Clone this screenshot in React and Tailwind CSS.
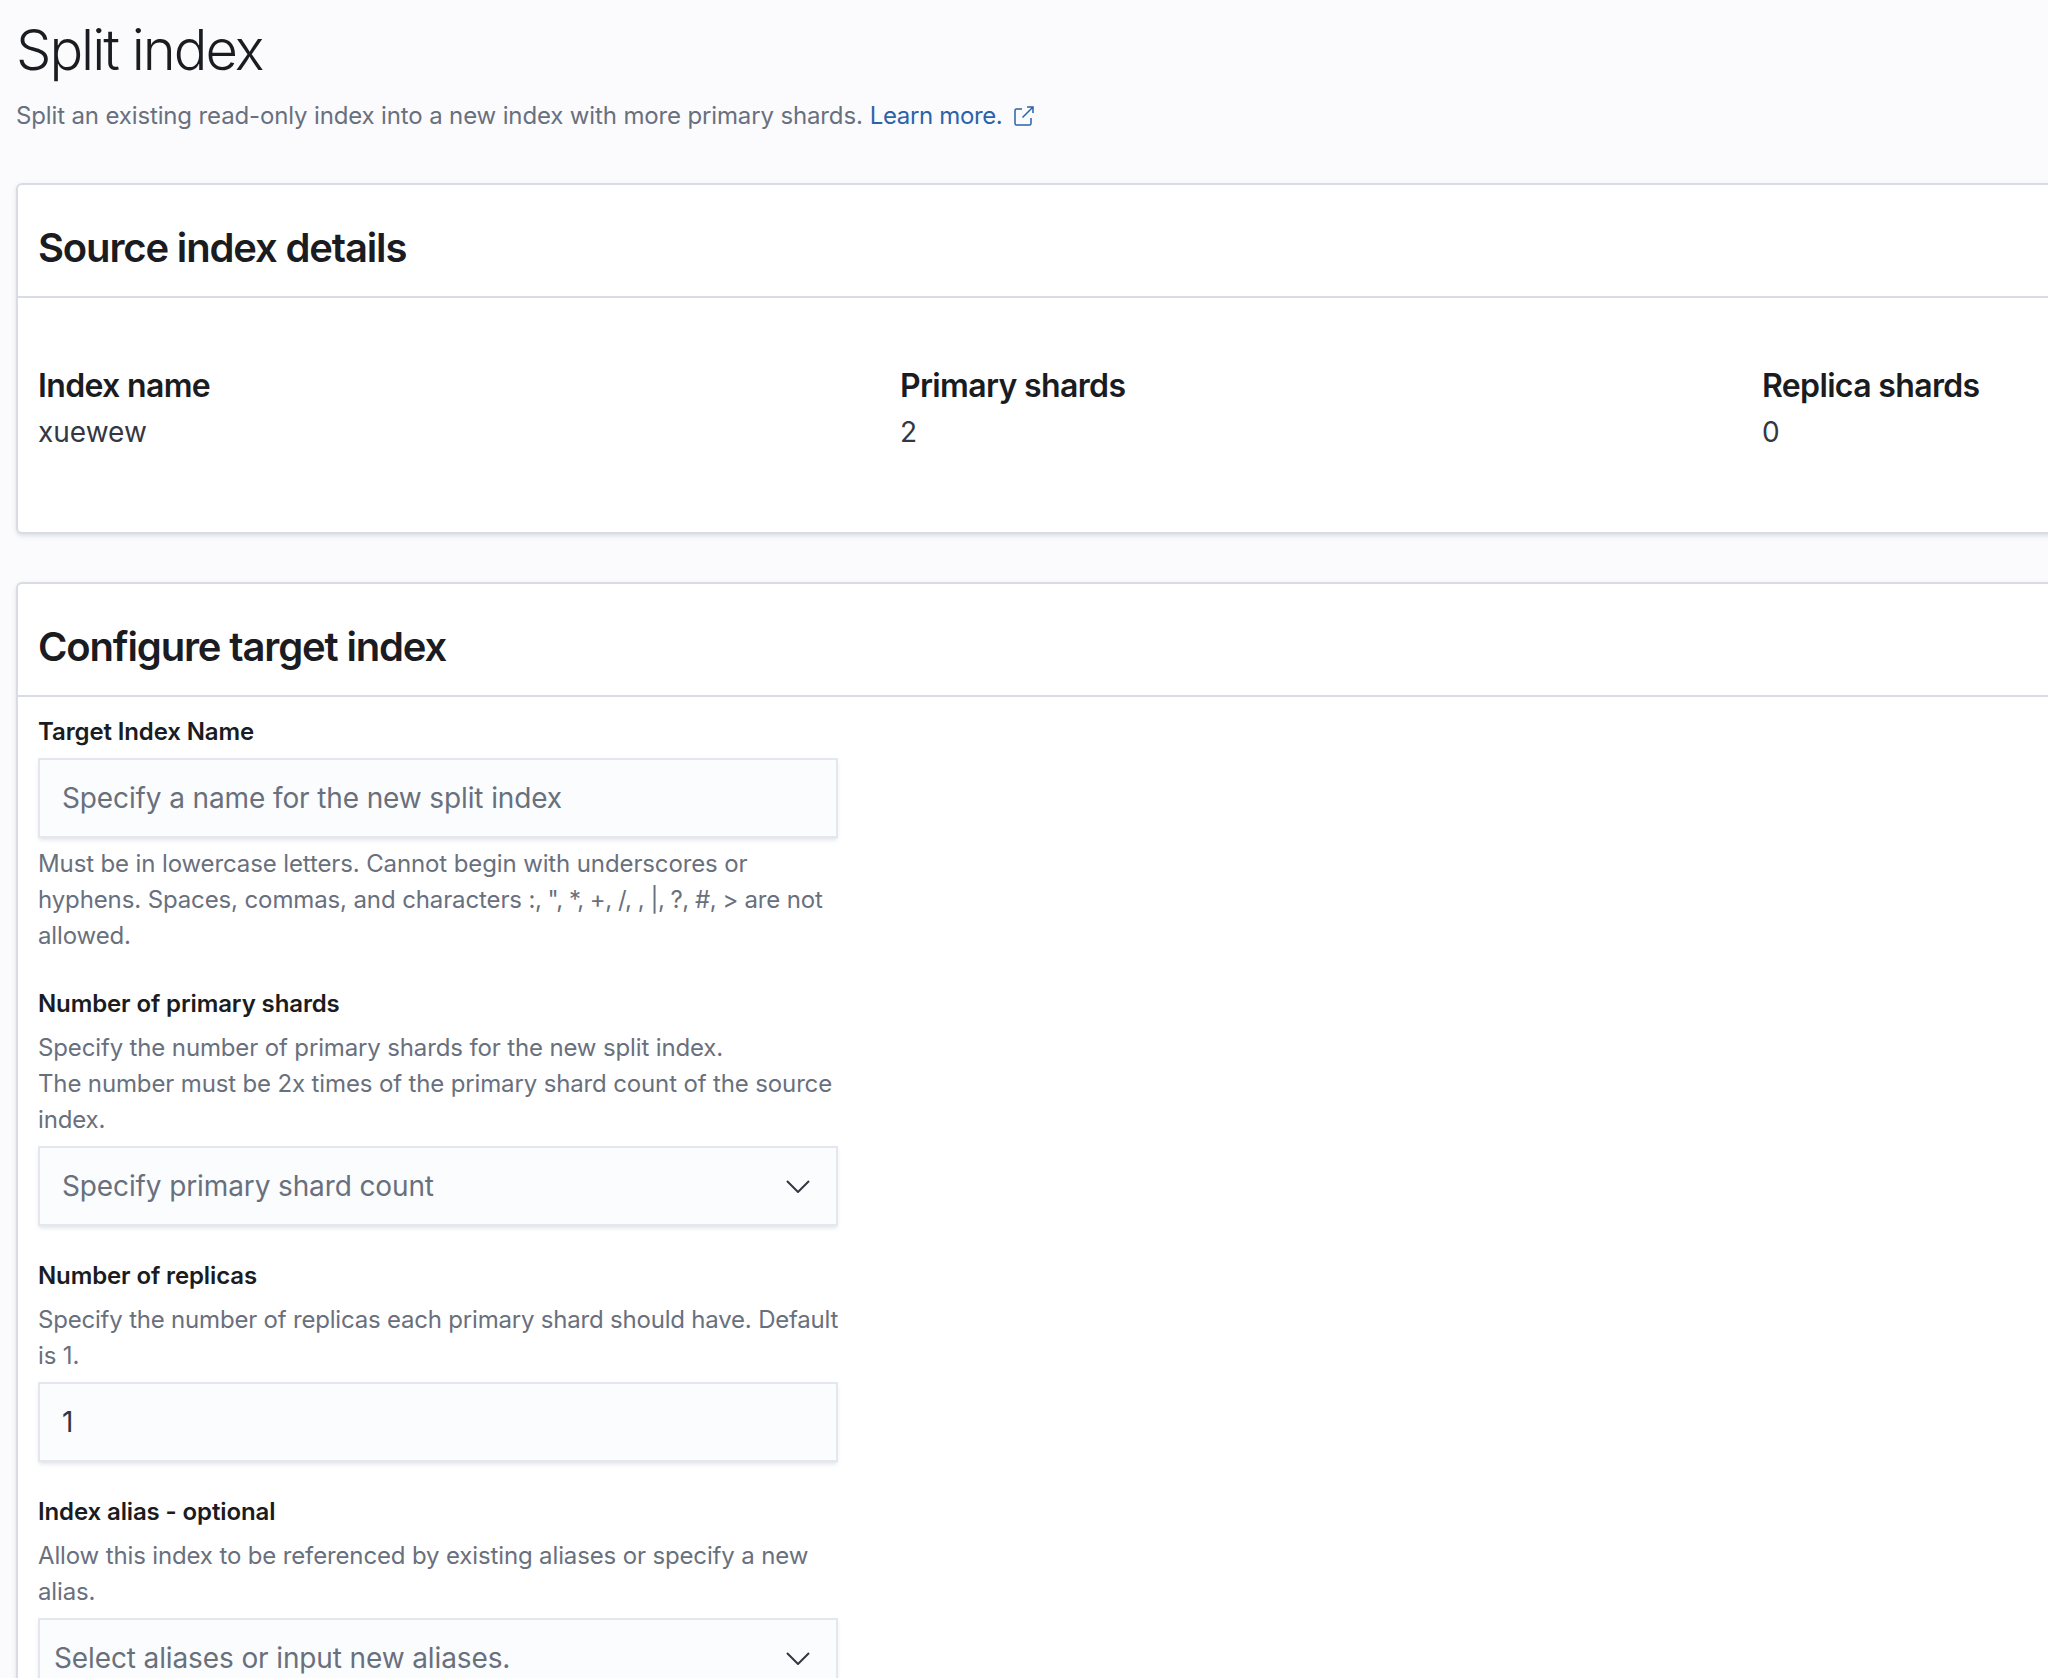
import { useState } from "react";

const font = { fontFamily: "Inter, 'Noto Sans', sans-serif" };

function Chevron() {
  return (
    <svg width="24" height="13" viewBox="0 0 24 13" fill="none" className="shrink-0 text-[#343741]">
      <path d="M1 1 L12 12 L23 1" stroke="currentColor" strokeWidth="2" />
    </svg>
  );
}

function PopoutIcon() {
  return (
    <svg width="20" height="20" viewBox="0 0 20 20" fill="none" className="ml-[12px] inline-block shrink-0 text-[#2b63a8]">
      <path d="M8 3H2.5A1.5 1.5 0 0 0 1 4.500v13A1.5 1.500 0 0 0 2.500 19h13a1.500 1.500 0 0 0 1.500-1.500V12" stroke="currentColor" strokeWidth="1.5" />
      <path d="M8.500 11.500 19 1M13 1h6v6" stroke="currentColor" strokeWidth="1.5" />
    </svg>
  );
}

function Stat({ label, value }) {
  return (
    <div>
      <div className="text-[32px] leading-[44px] font-semibold tracking-[-0.65px] text-[#1a1c21]">{label}</div>
      <div className="mt-[2px] text-[28px] leading-[44px] text-[#343741]">{value}</div>
    </div>
  );
}

function Card({ title, children }) {
  return (
    <section className="w-[2700px] rounded-[6px] border-2 border-[#d9dce4] bg-white shadow-[0_2px_4px_rgba(152,162,179,0.3)]">
      <div className="flex h-[113px] items-center border-b-2 border-[#d9dce4] px-[20px] pt-[15px]">
        <h2 className="text-[40px] font-[560] tracking-[-1.15px] text-[#1a1c21]">{title}</h2>
      </div>
      {children}
    </section>
  );
}

function Field({ label, help, children, after }) {
  return (
    <div className="w-[800px]">
      <div className="text-[24px] leading-[36px] font-semibold tracking-[-0.12px] text-[#1a1c21]">{label}</div>
      {help ? (
        <p className="mt-[8px] mb-[8px] text-[24px] leading-[36px] tracking-[-0.14px] text-[#69707d]">{help}</p>
      ) : (
        <div className="h-[8px]" />
      )}
      {children}
      {after ? <div className="mt-[8px] text-[24px] leading-[36px] tracking-[-0.12px] text-[#69707d]">{after}</div> : null}
    </div>
  );
}

const boxClass =
  "flex h-[80px] w-[800px] items-center justify-between border-2 border-[#e4e7ee] bg-[#fbfcfe] text-[28px] tracking-[-0.12px] shadow-[0_3px_4px_-1px_rgba(152,162,179,0.3)] outline-none";

function SelectBox({ text, pad }) {
  return (
    <div className={`${boxClass} ${pad} pr-[26px] text-[#69707d]`}>
      <span>{text}</span>
      <Chevron />
    </div>
  );
}

export default function App() {
  const [name, setName] = useState("");
  const [replicas, setReplicas] = useState("1");

  return (
    <div style={font} className="h-[1678px] w-[2048px] overflow-hidden bg-[#fbfbfd] pl-[16px]">
      <h1 className="pt-[14px] text-[56px] leading-[72px] font-light tracking-[-2px] text-[#1a1c21]">Split index</h1>
      <p className="mt-[12px] flex items-center text-[24px] leading-[36px] tracking-[-0.14px] text-[#69707d]">
        Split an existing read-only index into a new index with more primary shards.
        <a href="#" className="ml-[7px] tracking-[-0.35px] text-[#2b63a8]">Learn more.</a>
        <PopoutIcon />
      </p>

      <div className="mt-[49px]">
        <Card title="Source index details">
          <div className="grid h-[234px] w-[2626px] grid-cols-3 items-center px-[20px] pb-[12px]">
            <Stat label="Index name" value="xuewew" />
            <Stat label="Primary shards" value="2" />
            <Stat label="Replica shards" value="0" />
          </div>
        </Card>
      </div>

      <div className="mt-[48px]">
        <Card title="Configure target index">
          <div className="flex flex-col gap-[32px] px-[20px] pt-[17px]">
            <Field
              label="Target Index Name"
              after={
                <>
                  <div>Must be in lowercase letters. Cannot begin with underscores or</div>
                  <div>
                    hyphens. Spaces, commas, and characters{" "}
                    <span className="tracking-[-0.5px]">:, ", *, +, /, , |, ?, #, &gt;</span> are not
                  </div>
                  <div>allowed.</div>
                </>
              }
            >
              <input
                value={name}
                onChange={(e) => setName(e.target.value)}
                placeholder="Specify a name for the new split index"
                className={`${boxClass} px-[22px] text-[#343741] placeholder:text-[#69707d]`}
              />
            </Field>

            <Field
              label="Number of primary shards"
              help={
                <>
                  Specify the number of primary shards for the new split index.
                  <br />
                  The number must be 2x times of the primary shard count of the source index.
                </>
              }
            >
              <SelectBox text="Specify primary shard count" pad="pl-[22px]" />
            </Field>

            <Field
              label="Number of replicas"
              help={
                <>
                  <span className="block whitespace-nowrap tracking-[-0.2px]">Specify the number of replicas each primary shard should have. Default</span>
                  <span className="block">is 1.</span>
                </>
              }
            >
              <input
                value={replicas}
                onChange={(e) => setReplicas(e.target.value)}
                className={`${boxClass} px-[22px] text-[#343741]`}
              />
            </Field>

            <Field label="Index alias - optional" help="Allow this index to be referenced by existing aliases or specify a new alias.">
              <SelectBox text="Select aliases or input new aliases." pad="pl-[14px]" />
            </Field>
          </div>
        </Card>
      </div>
    </div>
  );
}
